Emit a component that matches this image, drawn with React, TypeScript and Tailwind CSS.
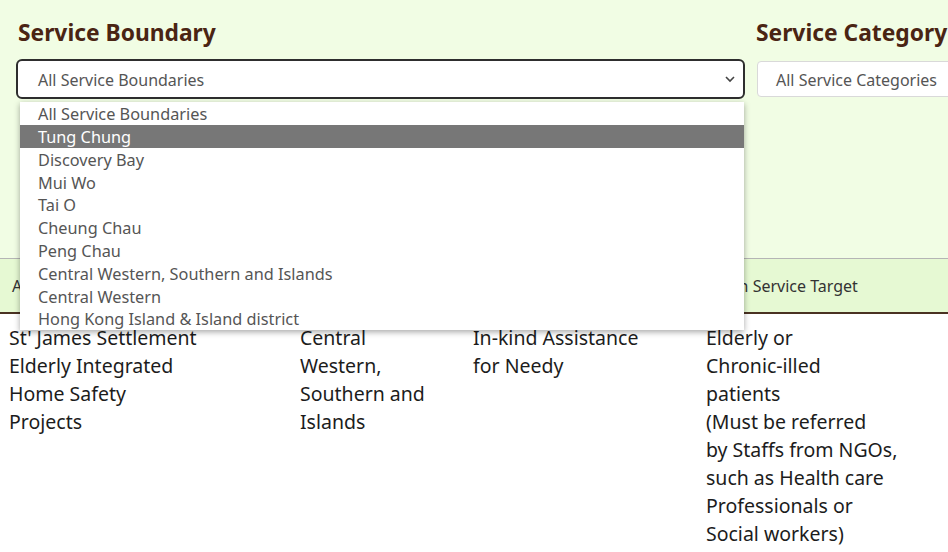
import React from "react";

const boundaries = [
  "All Service Boundaries",
  "Tung Chung",
  "Discovery Bay",
  "Mui Wo",
  "Tai O",
  "Cheung Chau",
  "Peng Chau",
  "Central Western, Southern and Islands",
  "Central Western",
  "Hong Kong Island & Island district",
];

const rows = [
  {
    agency: ["St' James Settlement", "Elderly Integrated", "Home Safety", "Projects"],
    boundary: ["Central", "Western,", "Southern and", "Islands"],
    category: ["In-kind Assistance", "for Needy"],
    target: [
      "Elderly or",
      "Chronic-illed",
      "patients",
      "(Must be referred",
      "by Staffs from NGOs,",
      "such as Health care",
      "Professionals or",
      "Social workers)",
    ],
  },
];

function Lines({ lines }: { lines: string[] }) {
  return (
    <div>
      {lines.map((l) => (
        <div key={l}>{l}</div>
      ))}
    </div>
  );
}

export default function App() {
  const selected = 1;
  return (
    <div className="relative h-[552px] w-[948px] overflow-hidden bg-white font-['Noto_Sans','Open_Sans',sans-serif]">
      {/* filters */}
      <div className="flex h-[259px] gap-3 border-b border-[#b5b5b5] bg-[#f1fde4] pl-4 pt-[17px]">
        <div className="w-[729px] shrink-0">
          <h2 className="ml-0.5 text-[22.8px] leading-[32px] font-bold text-[#4a2413]">Service Boundary</h2>
          <div className="mt-[10px] flex h-10 items-center justify-between rounded-md border-2 border-[#2e2e2e] bg-white pr-[7px] pl-5 text-[16px] text-[#555]">
            <span className="translate-y-px">All Service Boundaries</span>
            <svg viewBox="0 0 12 8" className="h-2 w-3" fill="none" stroke="#444" strokeWidth="1.6">
              <polyline points="2,2 6,6 10,2" />
            </svg>
          </div>
        </div>
        <div className="shrink-0">
          <h2 className="-ml-px text-[22.8px] leading-[32px] font-bold whitespace-nowrap text-[#4a2413]">
            Service Category
          </h2>
          <div className="mt-[12px] flex h-9 w-[220px] items-center rounded border border-[#d9d9d9] bg-white pl-[18px] text-[16px] whitespace-nowrap text-[#555]">
            <span className="translate-y-px">All Service Categories</span>
          </div>
        </div>
      </div>

      {/* table */}
      <div className="grid h-[55px] grid-cols-[291px_173px_233px_1fr] items-center border-b-2 border-[#4a3222] bg-[#e6f9d3] pl-3 text-[16px] text-[#333]">
        <div>Agency</div>
        <div>Service Boundary</div>
        <div>Service Category</div>
        <div className="pl-[2px]">Main Service Target</div>
      </div>
      {rows.map((r) => (
        <div
          key={r.agency[0]}
          className="grid grid-cols-[291px_173px_233px_1fr] pt-[10px] pl-[9px] text-[19.5px] leading-[28px] text-[#1c1c1c]"
        >
          <Lines lines={r.agency} />
          <Lines lines={r.boundary} />
          <Lines lines={r.category} />
          <Lines lines={r.target} />
        </div>
      ))}

      {/* open select list */}
      <ul className="absolute top-[102px] left-5 w-[724px] bg-white text-[16.3px] text-[#555] shadow-[0_2px_6px_rgba(0,0,0,0.35)]">
        {boundaries.map((b, i) => (
          <li
            key={b}
            className={
              i === selected
                ? "flex h-[22.8px] items-center bg-[#777] pl-[18px] text-white"
                : "flex h-[22.8px] items-center pl-[18px]"
            }
          >
            <span className="translate-y-px">{b}</span>
          </li>
        ))}
      </ul>
    </div>
  );
}
